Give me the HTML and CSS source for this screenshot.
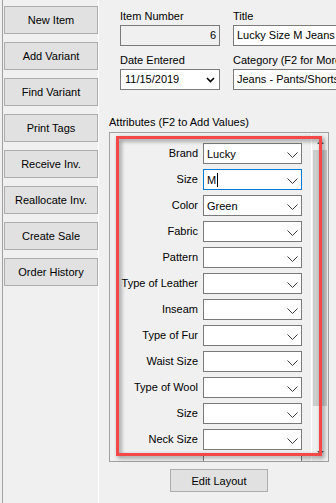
FILE: index.html
```html
<!DOCTYPE html>
<html lang="en">
<head>
  <meta charset="UTF-8">
  <meta name="viewport" content="width=device-width, initial-scale=1.0">
  <title>Item Detail</title>
  <link rel="stylesheet" href="styles.css">
</head>
<body>
  <div class="window">
    <aside class="sidebar">
      <button class="btn">New Item</button>
      <button class="btn">Add Variant</button>
      <button class="btn">Find Variant</button>
      <button class="btn">Print Tags</button>
      <button class="btn">Receive Inv.</button>
      <button class="btn">Reallocate Inv.</button>
      <button class="btn">Create Sale</button>
      <button class="btn">Order History</button>
    </aside>

    <main class="detail">
      <div class="fields">
        <div class="field">
          <span class="field-label">Item Number</span>
          <div class="input readonly">6</div>
        </div>
        <div class="field">
          <span class="field-label">Title</span>
          <div class="input">Lucky Size M Jeans</div>
        </div>
        <div class="field second">
          <span class="field-label">Date Entered</span>
          <div class="input date">
            <span>11/15/2019</span>
            <svg class="date-arrow" width="9" height="6" viewBox="0 0 9 6"><polyline points="1,1 4.5,4.5 8,1" fill="none" stroke="#000" stroke-width="1.6"/></svg>
          </div>
        </div>
        <div class="field second">
          <span class="field-label">Category (F2 for More)</span>
          <div class="input">Jeans - Pants/Shorts</div>
        </div>
      </div>

      <div class="attr-title">Attributes (F2 to Add Values)</div>
      <div class="group">
        <div class="rows">
          <label class="attr-label">Brand</label>
          <div class="combo"><span>Lucky</span><svg class="chev" width="11" height="6" viewBox="0 0 11 6"><polyline points="0.5,0.5 5.5,5.5 10.5,0.5" fill="none" stroke="#3c3c3c"/></svg></div>

          <label class="attr-label">Size</label>
          <div class="combo focused"><span>M<i class="caret"></i></span><svg class="chev" width="11" height="6" viewBox="0 0 11 6"><polyline points="0.5,0.5 5.5,5.5 10.5,0.5" fill="none" stroke="#3c3c3c"/></svg></div>

          <label class="attr-label">Color</label>
          <div class="combo"><span>Green</span><svg class="chev" width="11" height="6" viewBox="0 0 11 6"><polyline points="0.5,0.5 5.5,5.5 10.5,0.5" fill="none" stroke="#3c3c3c"/></svg></div>

          <label class="attr-label">Fabric</label>
          <div class="combo"><span></span><svg class="chev" width="11" height="6" viewBox="0 0 11 6"><polyline points="0.5,0.5 5.5,5.5 10.5,0.5" fill="none" stroke="#3c3c3c"/></svg></div>

          <label class="attr-label">Pattern</label>
          <div class="combo"><span></span><svg class="chev" width="11" height="6" viewBox="0 0 11 6"><polyline points="0.5,0.5 5.5,5.5 10.5,0.5" fill="none" stroke="#3c3c3c"/></svg></div>

          <label class="attr-label">Type of Leather</label>
          <div class="combo"><span></span><svg class="chev" width="11" height="6" viewBox="0 0 11 6"><polyline points="0.5,0.5 5.5,5.5 10.5,0.5" fill="none" stroke="#3c3c3c"/></svg></div>

          <label class="attr-label">Inseam</label>
          <div class="combo"><span></span><svg class="chev" width="11" height="6" viewBox="0 0 11 6"><polyline points="0.5,0.5 5.5,5.5 10.5,0.5" fill="none" stroke="#3c3c3c"/></svg></div>

          <label class="attr-label">Type of Fur</label>
          <div class="combo"><span></span><svg class="chev" width="11" height="6" viewBox="0 0 11 6"><polyline points="0.5,0.5 5.5,5.5 10.5,0.5" fill="none" stroke="#3c3c3c"/></svg></div>

          <label class="attr-label">Waist Size</label>
          <div class="combo"><span></span><svg class="chev" width="11" height="6" viewBox="0 0 11 6"><polyline points="0.5,0.5 5.5,5.5 10.5,0.5" fill="none" stroke="#3c3c3c"/></svg></div>

          <label class="attr-label">Type of Wool</label>
          <div class="combo"><span></span><svg class="chev" width="11" height="6" viewBox="0 0 11 6"><polyline points="0.5,0.5 5.5,5.5 10.5,0.5" fill="none" stroke="#3c3c3c"/></svg></div>

          <label class="attr-label">Size</label>
          <div class="combo"><span></span><svg class="chev" width="11" height="6" viewBox="0 0 11 6"><polyline points="0.5,0.5 5.5,5.5 10.5,0.5" fill="none" stroke="#3c3c3c"/></svg></div>

          <label class="attr-label">Neck Size</label>
          <div class="combo"><span></span><svg class="chev" width="11" height="6" viewBox="0 0 11 6"><polyline points="0.5,0.5 5.5,5.5 10.5,0.5" fill="none" stroke="#3c3c3c"/></svg></div>

          <span class="attr-label"></span>
          <div class="combo"></div>
        </div>

        <div class="scrollbar">
          <div class="scroll-btn">
            <svg width="7" height="4" viewBox="0 0 7 4"><polygon points="0,4 3.5,0 7,4" fill="#606060"/></svg>
          </div>
          <div class="thumb"></div>
          <div class="scroll-space"></div>
          <div class="scroll-btn">
            <svg width="7" height="4" viewBox="0 0 7 4"><polygon points="0,0 3.5,4 7,0" fill="#606060"/></svg>
          </div>
        </div>
      </div>

      <div class="footer">
        <button class="btn small">Edit Layout</button>
      </div>
    </main>
  </div>

  <!-- annotation drawn over the attributes panel -->
  <div class="highlight"></div>
</body>
</html>
```

FILE: styles.css
```css
* {
  box-sizing: border-box;
}

body {
  margin: 0;
  width: 336px;
  height: 503px;
  overflow: hidden;
  background-color: #f0f0f0;
  font-family: "Liberation Sans", Arial, sans-serif;
  font-size: 11px;
  color: #000;
  position: relative;
}

.window {
  display: flex;
  height: 503px;
}

.sidebar {
  width: 97px;
  margin-left: 2px;
  border-left: 1px solid #a0a0a0;
  border-right: 1px solid #fff;
  padding: 6px 0 0 1px;
  display: flex;
  flex-direction: column;
  gap: 8px;
  flex-shrink: 0;
}

.btn {
  height: 28px;
  background-color: #e1e1e1;
  border: 1px solid #adadad;
  font: inherit;
  color: #000;
  padding: 0;
}

.btn.small {
  width: 98px;
  height: 23px;
}

.detail {
  flex: 1;
  padding: 10px 0 0 10px;
  overflow: hidden;
}

.fields {
  margin-left: 11px;
  display: grid;
  grid-template-columns: 100px 120px;
  column-gap: 13px;
}

.field.second {
  margin-top: 8px;
}

.field-label {
  display: block;
  line-height: 13px;
  margin-bottom: 2px;
  white-space: nowrap;
}

.input {
  height: 21px;
  border: 1px solid #7a7a7a;
  background-color: #fff;
  padding: 0 3px;
  line-height: 19px;
  white-space: nowrap;
  overflow: hidden;
}

.input.readonly {
  background-color: #f0f0f0;
  text-align: right;
}

.input.date {
  display: flex;
  align-items: center;
  justify-content: space-between;
  padding: 0 4px 0 4px;
}

.attr-title {
  margin-top: 26px;
  line-height: 13px;
  margin-bottom: 3px;
}

.group {
  width: 220px;
  height: 330px;
  border: 1px solid #a0a0a0;
  display: flex;
  overflow: hidden;
}

.rows {
  flex: 1;
  padding-top: 10px;
  display: grid;
  grid-template-columns: 88px 99px;
  grid-auto-rows: 21px;
  column-gap: 5px;
  row-gap: 5px;
  align-content: start;
}

.attr-label {
  text-align: right;
  line-height: 21px;
  white-space: nowrap;
}

.combo {
  height: 21px;
  border: 1px solid #7a7a7a;
  background-color: #fff;
  padding: 0 3px;
  display: flex;
  align-items: center;
  justify-content: space-between;
}

.combo.focused {
  border-color: #0078d7;
}

.chev {
  margin-top: 2px;
}

.caret {
  display: inline-block;
  width: 1px;
  height: 14px;
  margin-left: 1px;
  background-color: #000;
  vertical-align: -3px;
}

.scrollbar {
  width: 17px;
  border-left: 1px solid #fff;
  display: flex;
  flex-direction: column;
  background-color: #f0f0f0;
}

.scroll-btn {
  height: 17px;
  display: flex;
  align-items: center;
  justify-content: center;
}

.thumb {
  height: 256px;
  margin: 0 1px;
  background-color: #cdcdcd;
}

.scroll-space {
  flex: 1;
}

.footer {
  width: 220px;
  display: flex;
  justify-content: center;
  margin-top: 7px;
}

.highlight {
  position: absolute;
  left: 116px;
  top: 136px;
  width: 206px;
  height: 320px;
  border: 3px solid #f44848;
  filter: drop-shadow(2px 2px 2px rgba(0, 0, 0, 0.45));
}
```
